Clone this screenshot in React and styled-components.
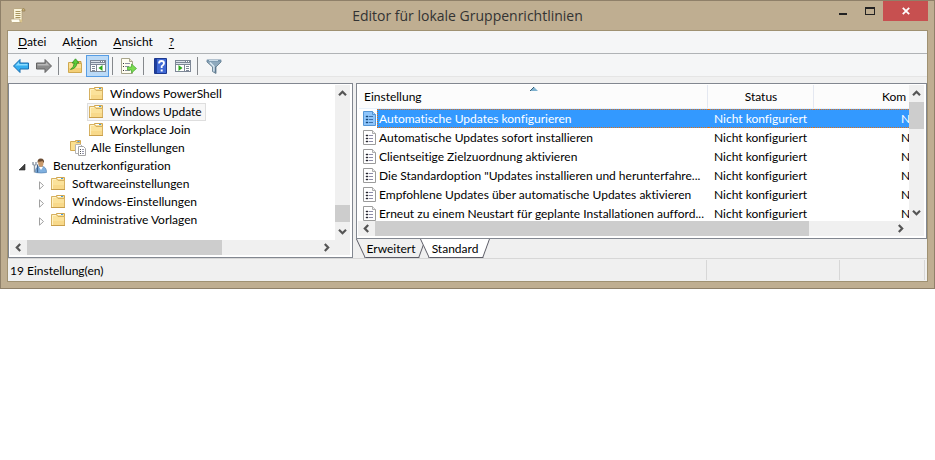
import React, { useState } from "react";
import styled, { createGlobalStyle } from "styled-components";

const GlobalStyle = createGlobalStyle`
  * {
    box-sizing: border-box;
  }

  body {
    margin: 0;
    background: #fff;
    color: #000;
    font: 12px/18px Lato, "Open Sans", sans-serif;
    font-variant-ligatures: none;
  }

  button {
    margin: 0;
    padding: 0;
    border: 0;
    background: none;
    color: inherit;
    font: inherit;
    font-variant-ligatures: none;
  }
`;

const Window = styled.div`
  padding: 0 6px 6px;
  border: 1px solid #8f8069;
  background: #bfae91;
`;

const TitleBar = styled.header`
  display: grid;
  grid-template-columns: 98px 1fr 98px;
  height: 29px;
`;

const AppIcon = styled.div`
  padding: 6px 0 0 3px;
`;

const Title = styled.h1`
  margin: 0;
  color: #333;
  font-family: "Open Sans", sans-serif;
  font-size: 14px;
  font-weight: 400;
  line-height: 30px;
  text-align: center;
  white-space: nowrap;
`;

const WindowButtons = styled.div`
  display: flex;
  justify-content: flex-end;
  height: 20px;
`;

const WindowButton = styled.button`
  display: flex;
  align-items: center;
  justify-content: center;
  width: ${(props) => (props.$close ? "45px" : "27px")};
  background: ${(props) => (props.$close ? "#c75050" : "transparent")};
`;

const Client = styled.div`
  border: 1px solid #9f9172;
  background: #f0f0f0;
`;

const MenuBar = styled.nav`
  display: flex;
  height: 23px;
  padding-left: 10px;
  gap: 16px;
  border-bottom: 1px solid #b0b3b6;
  background: #f5f6f7;

  button {
    line-height: 22px;
  }

  u {
    text-underline-offset: 2px;
  }
`;

const Toolbar = styled.div`
  display: flex;
  height: 23px;
  padding: 1px 0 0 1px;
  border-bottom: 1px solid #e5e5e5;
  background: #f5f6f7;
`;

const ToolButton = styled.button`
  display: flex;
  align-items: center;
  justify-content: center;
  width: 23px;
  height: 22px;
  border: 1px solid ${(props) => (props.$active ? "#569de5" : "transparent")};
  background: ${(props) => (props.$active ? "#bbdaf7" : "transparent")};
`;

const Separator = styled.span`
  width: 1px;
  height: 18px;
  margin: 2px 4px 0 3px;
  background: #85888c;
`;

const Main = styled.main`
  display: grid;
  grid-template-columns: 345px minmax(0, 1fr);
  gap: 3px;
  padding: 6px 0 0;
`;

const Frame = styled.div`
  display: grid;
  grid-template-columns: minmax(0, 1fr) 15px;
  grid-template-rows: minmax(0, 1fr) 15px;
  padding: 1px 2px 2px 1px;
  border: 1px solid #828790;
  background: #fff;
`;

const Corner = styled.div`
  background: #f0f0f0;
`;

const Bar = styled.div`
  display: flex;
  flex-direction: ${(props) => (props.$vertical ? "column" : "row")};
  background: #f0f0f0;
`;

const ArrowButton = styled.button`
  display: flex;
  flex: 0 0 17px;
  align-items: center;
  justify-content: center;

  svg {
    transform: rotate(${(props) => props.$turn}deg);
  }
`;

const Track = styled.div`
  display: flex;
  flex: 1;
  flex-direction: inherit;
`;

const Thumb = styled.div`
  flex: 0 0 ${(props) => props.$size};
  margin-top: ${(props) => props.$offset || 0};
  background: #cdcdcd;
`;

const Tree = styled.ul`
  margin: 0;
  padding: 0 0 11px 1px;
  list-style: none;
`;

const TreeRow = styled.li`
  display: flex;
  height: 18px;
  padding-left: ${(props) => props.$level * 19}px;
`;

const Expander = styled.span`
  display: flex;
  align-items: center;
  width: 19px;
  padding: 2px 0 0 8px;
`;

const TreeLabel = styled.button`
  display: flex;
  align-items: center;
  gap: 5px;
  padding: 0 3px 0 1px;
  border: 1px solid ${(props) => (props.$selected ? "#dedede" : "transparent")};
  background: ${(props) => (props.$selected ? "#f7f7f7" : "transparent")};
  line-height: 16px;
  white-space: nowrap;
`;

const RightPane = styled.section`
  display: flex;
  flex-direction: column;
`;

const ListView = styled.div`
  height: 136px;
  padding-left: 1px;
  overflow: hidden;
`;

const Table = styled.table`
  width: 100%;
  border-spacing: 0;
  table-layout: fixed;
`;

const Column = styled.col`
  width: ${(props) => props.$width};
`;

const HeadCell = styled.th`
  height: 24px;
  padding: 0 0 0 ${(props) => props.$indent || 0}px;
  background: linear-gradient(#e4e8f1, #e4e8f1) right / 1px 100% no-repeat #fcfcfc;
  border-bottom: 1px solid #e8f1fb;
  font-weight: 400;
  line-height: 23px;
  text-align: ${(props) => props.$align || "left"};
  white-space: nowrap;

  &:last-child {
    background: #fcfcfc;
  }
`;

const SortMark = styled.svg`
  position: absolute;
  top: 2px;
  left: 50%;
  margin-left: -6px;
`;

const HeadLabel = styled.div`
  position: relative;
`;

const Row = styled.tr`
  height: 19px;
  color: ${(props) => (props.$selected ? "#fff" : "#000")};

  td {
    padding: 0;
    background: ${(props) => (props.$selected ? "#3399ff" : "#fff")};
    white-space: nowrap;
  }

  td:first-child {
    padding-left: 4px;
    background: #fff;
  }
`;

const Cell = styled.div`
  height: 19px;
  padding-left: ${(props) => props.$indent}px;
  border: 0 dotted #d8701c;
  border-width: ${(props) => (props.$selected ? "1px 0" : "0")};
  line-height: ${(props) => (props.$selected ? "17px" : "19px")};
  overflow: hidden;
`;

const NameCell = styled.div`
  display: flex;
  align-items: center;
  gap: 1px;

  > ${Cell} {
    flex: 1;
    min-width: 0;
    border-left-width: ${(props) => (props.$selected ? "1px" : "0")};
    background: ${(props) => (props.$selected ? "#3399ff" : "#fff")};
    text-overflow: ellipsis;
  }
`;

const Tabs = styled.div`
  display: flex;
  height: 19px;
`;

const Tab = styled.button`
  position: relative;
  z-index: ${(props) => (props.$active ? 1 : 0)};
  min-width: 70px;
  height: 19px;
  line-height: 19px;
  text-align: center;

  & + & {
    margin-left: -6px;
  }

  &::before,
  &::after {
    content: "";
    position: absolute;
    z-index: -1;
    top: 0;
    bottom: 0;
    border: 0 solid #5c5c66;
    background: ${(props) => (props.$active ? "#fff" : "#f0f0f0")};
  }

  &::before {
    left: 0;
    right: 16px;
    border-width: 0 0 1px 1px;
    transform: skewX(25deg);
    transform-origin: top left;
  }

  &::after {
    left: 16px;
    right: 0;
    border-width: 0 1px 1px 0;
    transform: skewX(-20deg);
    transform-origin: top right;
  }
`;

const StatusBar = styled.footer`
  display: grid;
  grid-template-columns: 1fr 133px 85px 2px;
  height: 23px;
  padding-top: 1px;
  border-top: 1px solid #d7d7d7;
  line-height: 22px;
`;

const StatusCell = styled.div`
  height: 20px;
  padding-left: 2px;
  border-right: 1px solid #d7d7d7;

  &:last-child {
    border: 0;
  }
`;

const Icon = ({ w = 16, h = 16, children }) => (
  <svg width={w} height={h} viewBox={`0 0 ${w} ${h}`} aria-hidden="true">
    {children}
  </svg>
);

const ScrollIcon = () => (
  <Icon w={16} h={17}>
    <path d="M3.500 2.500Q4 1.500 5 1.500h8.500Q12 2 12 4v10H3.500z" fill="#fbf5dc" stroke="#b3a077" strokeWidth=".8" />
    <path d="M12 4q0-2.500 1.500-2.500Q15 1.500 15 4z" fill="#cdb273" stroke="#8e7a4d" strokeWidth=".7" />
    <path d="M.8 12h9v1.500q0 2 1.500 2H2.500Q.8 15.500.8 12z" fill="#fffdf0" stroke="#b3a077" strokeWidth=".8" />
    <path d="M9.800 12.500q0 3 1.500 3 1.200-.5.900-3z" fill="#d9c48c" />
    <path d="M5.500 4.500h5M5.500 6.500h5M5.500 8.500h5M5.500 10.500h5" stroke="#a8955f" />
  </Icon>
);

const BackIcon = () => (
  <Icon>
    <path
      d="M.5 8 7 1.500V5h8.500v6H7v3.500z"
      fill="#35aef0"
      stroke="#1a6cae"
      strokeLinejoin="round"
    />
    <path d="M2.500 7.500 6 4v2h8.500v1.500z" fill="#8bdcff" />
  </Icon>
);

const ForwardIcon = () => (
  <Icon>
    <path
      d="M15.500 8 9 1.500V5H.5v6H9v3.500z"
      fill="#8b8b8b"
      stroke="#646464"
      strokeLinejoin="round"
    />
    <path d="M13.500 7.500 10 4v2H1.500v1.500z" fill="#b9b9b9" />
  </Icon>
);

const UpIcon = () => (
  <Icon>
    <path d="M8 3.500h6v3H8z" fill="#f3cf77" stroke="#c59c43" />
    <path d="M1.500 4.500h4l1 1h8v9h-13z" fill="#fae196" stroke="#cfa850" />
    <path d="M2 10h12v4H2z" fill="#f3cf77" />
    <path
      d="M3.500 11.500Q9.500 10.500 10 5h2L8.500.8 5 5h2.200Q7 9 3.500 11.500z"
      fill="#5ccb38"
      stroke="#26861a"
      strokeWidth=".7"
    />
  </Icon>
);

const PaneIcon = ({ flip }) => (
  <Icon>
    <g shapeRendering="crispEdges">
      <path d="M0 2h16v12H0z" fill="#7d8796" />
      <path d="M1 3h9v1H1zM1 5h14v1H1z" fill="#dce2ea" />
      <path d="M11 3h1v1h-1zM13 3h1v1h-1z" fill="#fff" />
      <path d="M1 7h14v6H1z" fill="#fff" />
      {flip ? (
        <path d="M9 7h1v6H9zM11 8h3v1h-3zM11 10h3v1h-3zM11 12h3v1h-3z" fill="#7d8796" />
      ) : (
        <path d="M6 7h1v6H6zM2 8h3v1H2zM2 10h3v1H2zM2 12h3v1H2z" fill="#7d8796" />
      )}
    </g>
    <path d={flip ? "M3.500 7v6L7.500 10z" : "M12.500 7v6L8.500 10z"} fill="#2daa1b" />
  </Icon>
);

const ExportIcon = () => (
  <Icon>
    <path d="M.5.5h8l3 3v12H.5z" fill="#fffdf0" stroke="#a8a58c" />
    <path d="M8.500.5v3h3" fill="#e7e3c8" stroke="#a8a58c" />
    <path d="M4 5.500h5M4 8.500h4M4 12.500h5" stroke="#8d8fa0" />
    <path d="M2 5.500h1M2 8.500h1M2 12.500h1" stroke="#333" />
    <path
      d="M6.500 9h4V6l5 4.500-5 4.500v-3h-4z"
      fill="#7bdc50"
      stroke="#45a82f"
      strokeWidth=".7"
    />
  </Icon>
);

const HelpIcon = () => (
  <Icon>
    <path d="M2.500.5h12v15h-12z" fill="#3f68d4" stroke="#1c388f" />
    <path d="M3 1h2v14H3z" fill="#1f3f9d" />
    <path
      d="M7 5.500Q7 3 9.500 3T12 5.300Q12 7 9.700 8.200V10"
      fill="none"
      stroke="#fff"
      strokeWidth="1.800"
    />
    <path d="M8.700 11.500h2v2h-2z" fill="#fff" />
  </Icon>
);

const FilterIcon = () => (
  <Icon>
    <path d="M1 2.500h14v1.500L10 9v6.500L6.500 13.500V9L1 4z" fill="#8ea9bd" stroke="#5d7688" strokeWidth=".8" />
    <path d="M4 4.500 8 8.500V13.500" fill="none" stroke="#dceaf3" strokeWidth="1.500" />
    <path d="M9.300 8.500v6" stroke="#547087" />
    <path d="M.8 1.500h14.400v2H.8z" fill="#7391a8" />
    <path d="M3 2.500h9" stroke="#c9dae6" />
  </Icon>
);

const FolderIcon = () => (
  <Icon>
    <path d="M5.500 5V1.500h8V5" fill="#f8dd93" stroke="#d0a650" />
    <path d="M6.500 2.500h5" stroke="#fff" />
    <path d="M10 2.500h2" stroke="#3f9be8" />
    <path d="M.5 2.500h5l1.500 2h6.500v9H.5z" fill="#fbe29a" stroke="#d6b162" />
    <path d="M1 9h12v4H1z" fill="#f8d98a" />
    <path d="M1.500 13V3.500H5" fill="none" stroke="#fff2c4" />
    <path d="M0 13.500h14" stroke="#c99f4b" />
  </Icon>
);

const AllIcon = () => (
  <Icon>
    <path d="M5.500 2V.5h5V4" fill="#f8dd93" stroke="#d0a650" />
    <path d="M7.500 1.500h2" stroke="#3f9be8" />
    <path d="M.5 1.500h5l1 1h4v8H.5z" fill="#fbe08f" stroke="#d2aa55" />
    <path d="M5.500 4.500h5l2 2v7h-7z" fill="#fff" stroke="#b4b4b4" />
    <path d="M8.500 6.500h5l2 2v7h-7z" fill="#fff" stroke="#a6a6a6" />
    <path d="M10 9.500h1M10 11.500h1M10 13.500h1" stroke="#555" />
    <path d="M12 9.500h2M12 11.500h2M12 13.500h2" stroke="#9a9bb0" />
  </Icon>
);

const UserIcon = () => (
  <Icon>
    <path d="M3.500 14.500q-.5-5.500 4-6h3q4 .5 4 6-5 1-11 0z" fill="#7fb0e0" stroke="#5683b0" strokeWidth=".7" />
    <path d="M7 9l2 3 2-3z" fill="#fff" />
    <path d="M6 4.500Q6 1 8.700 1t2.800 3.500Q11.500 9 9 9T6 4.500z" fill="#c99a6c" />
    <path d="M5.600 5Q5 .5 8.800.5T12 5Q11 4 10.500 3 8 4 6.500 3.500z" fill="#6b4d34" />
    <path d="M1 4v2.500l1.500 1 1.500-1V4M2.500 8v6.500" fill="none" stroke="#8b97a5" strokeWidth="1.400" />
    <path d="M5.500 6.500v8" stroke="#3e6390" strokeWidth="1.300" />
  </Icon>
);

const PolicyIcon = ({ selected }) => (
  <Icon w={13} h={15}>
    <path
      d="M.5.500h9l3 3v11H.5z"
      fill={selected ? "#8ec5fb" : "#fff"}
      stroke={selected ? "#5596d6" : "#9b9b9b"}
    />
    <path
      d="M9.500.500v3h3"
      fill={selected ? "#a9d3fc" : "#eee"}
      stroke={selected ? "#5596d6" : "#adadad"}
    />
    <path
      d="M3 5h2v1H3zM3 8h2v1H3zM3 11h2v1H3z"
      stroke={selected ? "#17497c" : "#27272e"}
      strokeWidth=".4"
      fill={selected ? "#17497c" : "#27272e"}
    />
    <path d="M6 5.500h4M6 8.500h4M6 11.500h4" stroke={selected ? "#3f72ad" : "#8d8ca8"} />
  </Icon>
);

const Chevron = () => (
  <Icon w={9} h={7}>
    <path d="M1 5.200 4.500 1.800 8 5.200" fill="none" stroke="#555" strokeWidth="2.200" />
  </Icon>
);

const ExpanderIcon = ({ open }) => (
  <Icon w={8} h={9}>
    {open ? (
      <path d="M6 1v6H0z" fill="#404040" stroke="#262626" strokeWidth=".6" />
    ) : (
      <path d="M1.500.8v7.400L5.500 4.500z" fill="#fff" stroke="#a0a0a0" />
    )}
  </Icon>
);

const ScrollBar = ({ vertical, size, offset }) => (
  <Bar $vertical={vertical}>
    <ArrowButton $turn={vertical ? 0 : -90} aria-label={vertical ? "Nach oben" : "Nach links"}>
      <Chevron />
    </ArrowButton>
    <Track>
      <Thumb $size={size} $offset={offset} />
    </Track>
    <ArrowButton $turn={vertical ? 180 : 90} aria-label={vertical ? "Nach unten" : "Nach rechts"}>
      <Chevron />
    </ArrowButton>
  </Bar>
);

const treeItems = [
  { name: "Windows PowerShell", level: 3 },
  { name: "Windows Update", level: 3 },
  { name: "Workplace Join", level: 3 },
  { name: "Alle Einstellungen", level: 2, icon: AllIcon },
  { name: "Benutzerkonfiguration", level: 0, icon: UserIcon, open: true },
  { name: "Softwareeinstellungen", level: 1, closed: true },
  { name: "Windows-Einstellungen", level: 1, closed: true },
  { name: "Administrative Vorlagen", level: 1, closed: true },
];

const policies = [
  "Automatische Updates konfigurieren",
  "Automatische Updates sofort installieren",
  "Clientseitige Zielzuordnung aktivieren",
  'Die Standardoption "Updates installieren und herunterfahre...',
  "Empfohlene Updates über automatische Updates aktivieren",
  "Erneut zu einem Neustart für geplante Installationen aufford...",
];

const App = () => {
  const [folder, setFolder] = useState("Windows Update");
  const [policy, setPolicy] = useState(0);
  const [tab, setTab] = useState("Standard");

  return (
    <>
      <GlobalStyle />
      <Window>
        <TitleBar>
          <AppIcon>
            <ScrollIcon />
          </AppIcon>
          <Title>Editor für lokale Gruppenrichtlinien</Title>
          <WindowButtons>
            <WindowButton aria-label="Minimieren">
              <Icon w={10} h={9}>
                <path d="M1 6h8v2H1z" fill="#222" />
              </Icon>
            </WindowButton>
            <WindowButton aria-label="Maximieren">
              <Icon w={10} h={9}>
                <path d="M0 0h10v8H0zM1 2v5h8V2z" fill="#222" fillRule="evenodd" />
              </Icon>
            </WindowButton>
            <WindowButton $close aria-label="Schließen">
              <Icon w={8} h={8}>
                <path d="m.8.800 6.400 6.400m0-6.400L.8 7.200" stroke="#fff" strokeWidth="1.800" />
              </Icon>
            </WindowButton>
          </WindowButtons>
        </TitleBar>

        <Client>
          <MenuBar>
            <button>
              <u>D</u>atei
            </button>
            <button>
              Ak<u>t</u>ion
            </button>
            <button>
              <u>A</u>nsicht
            </button>
            <button>
              <u>?</u>
            </button>
          </MenuBar>

          <Toolbar>
            <ToolButton aria-label="Zurück">
              <BackIcon />
            </ToolButton>
            <ToolButton aria-label="Vorwärts">
              <ForwardIcon />
            </ToolButton>
            <Separator />
            <ToolButton aria-label="Aufwärts">
              <UpIcon />
            </ToolButton>
            <ToolButton $active aria-label="Konsolenstruktur">
              <PaneIcon />
            </ToolButton>
            <Separator />
            <ToolButton aria-label="Liste exportieren">
              <ExportIcon />
            </ToolButton>
            <Separator />
            <ToolButton aria-label="Hilfe">
              <HelpIcon />
            </ToolButton>
            <ToolButton aria-label="Aktionsbereich">
              <PaneIcon flip />
            </ToolButton>
            <Separator />
            <ToolButton aria-label="Filter">
              <FilterIcon />
            </ToolButton>
          </Toolbar>

          <Main>
            <Frame>
              <Tree>
                {treeItems.map(({ name, level, icon: ItemIcon = FolderIcon, open, closed }) => (
                  <TreeRow key={name} $level={level}>
                    <Expander>{(open || closed) && <ExpanderIcon open={open} />}</Expander>
                    <TreeLabel $selected={folder === name} onClick={() => setFolder(name)}>
                      <ItemIcon />
                      {name}
                    </TreeLabel>
                  </TreeRow>
                ))}
              </Tree>
              <ScrollBar vertical size="17px" offset="103px" />
              <ScrollBar size="67%" />
              <Corner />
            </Frame>

            <RightPane>
              <Frame>
                <ListView>
                  <Table>
                    <colgroup>
                      <Column />
                      <Column $width="106px" />
                      <Column $width="95px" />
                    </colgroup>
                    <thead>
                      <tr>
                        <HeadCell $indent={5}>
                          <HeadLabel>
                            Einstellung
                            <SortMark width="8" height="4" viewBox="0 0 8 4">
                              <path d="M0 4 4 0l4 4z" fill="#7fb2cf" />
                              <path d="M0 4 4 0" stroke="#355e78" />
                            </SortMark>
                          </HeadLabel>
                        </HeadCell>
                        <HeadCell $align="center">Status</HeadCell>
                        <HeadCell $indent={68}>Kom</HeadCell>
                      </tr>
                    </thead>
                    <tbody>
                      {policies.map((name, i) => (
                        <Row key={name} $selected={i === policy} onClick={() => setPolicy(i)}>
                          <td>
                            <NameCell $selected={i === policy}>
                              <PolicyIcon selected={i === policy} />
                              <Cell $selected={i === policy} $indent={i === policy ? 1 : 2}>
                                {name}
                              </Cell>
                            </NameCell>
                          </td>
                          <td>
                            <Cell $selected={i === policy} $indent={6}>
                              Nicht konfiguriert
                            </Cell>
                          </td>
                          <td>
                            <Cell $selected={i === policy} $indent={87}>
                              N
                            </Cell>
                          </td>
                        </Row>
                      ))}
                    </tbody>
                  </Table>
                </ListView>
                <ScrollBar vertical size="27px" />
                <ScrollBar size="84%" />
                <Corner />
              </Frame>
              <Tabs>
                {["Erweitert", "Standard"].map((name) => (
                  <Tab key={name} $active={tab === name} onClick={() => setTab(name)}>
                    {name}
                  </Tab>
                ))}
              </Tabs>
            </RightPane>
          </Main>

          <StatusBar>
            <StatusCell>19 Einstellung(en)</StatusCell>
            <StatusCell />
            <StatusCell />
            <StatusCell />
          </StatusBar>
        </Client>
      </Window>
    </>
  );
};

export default App;
